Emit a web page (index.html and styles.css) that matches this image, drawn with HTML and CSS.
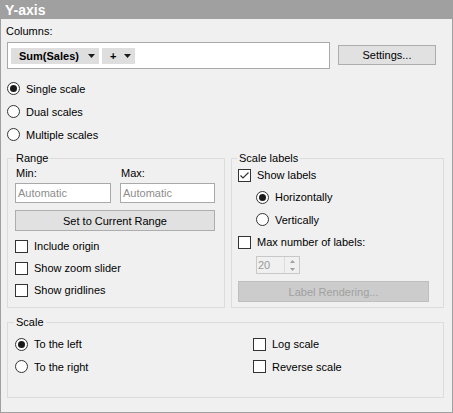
FILE: index.html
```html
<!DOCTYPE html>
<html>
<head>
<meta charset="utf-8">
<title>Y-axis</title>
<link rel="stylesheet" href="styles.css">
</head>
<body>
<div class="panel">
  <div class="title">Y-axis</div>
  <div class="body">
    <div class="cols-lbl">Columns:</div>
    <div class="cols-row">
      <div class="cols-box">
        <div class="chip chip-sum"><span>Sum(Sales)</span><svg class="arrow" width="7" height="4" viewBox="0 0 7 4"><polygon points="0,0 7,0 3.5,4" fill="#1a1a1a"/></svg></div>
        <div class="chip chip-plus"><span>+</span><svg class="arrow" width="7" height="4" viewBox="0 0 7 4"><polygon points="0,0 7,0 3.5,4" fill="#1a1a1a"/></svg></div>
      </div>
      <div class="btn settings">Settings...</div>
    </div>
    <div class="opt-list">
      <div class="opt"><span class="radio on"></span>Single scale</div>
      <div class="opt"><span class="radio"></span>Dual scales</div>
      <div class="opt"><span class="radio"></span>Multiple scales</div>
    </div>
    <div class="groups">
      <section class="grp range">
        <div class="legend">Range</div>
        <div class="range-grid">
          <div class="fld-lbl">Min:</div>
          <div class="fld-lbl">Max:</div>
          <div class="input">Automatic</div>
          <div class="input">Automatic</div>
        </div>
        <div class="btn wide">Set to Current Range</div>
        <div class="range-opts">
          <div class="opt"><span class="check"></span>Include origin</div>
          <div class="opt"><span class="check"></span>Show zoom slider</div>
          <div class="opt"><span class="check"></span>Show gridlines</div>
        </div>
      </section>
      <section class="grp labels">
        <div class="legend">Scale labels</div>
        <div class="label-opts">
          <div class="opt r1"><span class="check"><svg width="11" height="11" viewBox="0 0 11 11"><polyline points="1.5,5.5 4,8 9.5,2.5" fill="none" stroke="#333" stroke-width="1.2"/></svg></span>Show labels</div>
          <div class="opt ind r2"><span class="radio on"></span>Horizontally</div>
          <div class="opt ind r3"><span class="radio"></span>Vertically</div>
          <div class="opt r4"><span class="check"></span>Max number of labels:</div>
        </div>
        <div class="spin">
          <div class="spin-val">20</div>
          <div class="spin-btns">
            <div class="spin-b"><svg width="5" height="3" viewBox="0 0 5 3"><polygon points="0,3 5,3 2.5,0" fill="#a0a0a0"/></svg></div>
            <div class="spin-b"><svg width="5" height="3" viewBox="0 0 5 3"><polygon points="0,0 5,0 2.5,3" fill="#a0a0a0"/></svg></div>
          </div>
        </div>
        <div class="btn disabled render">Label Rendering...</div>
      </section>
    </div>
    <section class="grp scale">
      <div class="legend">Scale</div>
      <div class="scale-grid">
        <div class="opt"><span class="radio on"></span>To the left</div>
        <div class="opt"><span class="check"></span>Log scale</div>
        <div class="opt tall"><span class="radio"></span>To the right</div>
        <div class="opt tall"><span class="check"></span>Reverse scale</div>
      </div>
    </section>
  </div>
</div>
</body>
</html>
```
FILE: styles.css
```css
* { box-sizing: border-box; }
html, body { margin: 0; padding: 0; }
body {
  width: 453px;
  height: 413px;
  background: #ffffff;
  font-family: "Liberation Sans", Arial, sans-serif;
  font-size: 11px;
  color: #000;
}
.panel {
  width: 453px;
  height: 413px;
  background: #f0f0f0;
  border: 1px solid #a0a0a0;
  border-top: 0;
  display: flex;
  flex-direction: column;
}
.title {
  height: 19px;
  margin: 0 -1px;
  background: #a0a0a0;
  color: #fff;
  font-weight: bold;
  font-size: 14px;
  display: flex;
  align-items: center;
  padding-left: 5px;
}
.body { padding-left: 6px; }
.cols-lbl {
  height: 14px;
  margin-top: 5px;
  margin-left: -1px;
  display: flex;
  align-items: center;
}
.cols-row { display: flex; margin-top: 4px; }
.cols-box {
  width: 323px;
  height: 27px;
  background: #fff;
  border: 1px solid #a9a9a9;
  display: flex;
  align-items: flex-start;
  gap: 3px;
  padding: 5px 3px;
}
.chip {
  height: 16px;
  background: #dedede;
  display: flex;
  align-items: center;
  font-weight: bold;
  padding-left: 8px;
}
.chip .arrow { margin-left: auto; margin-right: 4px; flex: none; }
.chip-sum { width: 88px; }
.chip-plus { width: 33px; }
.btn {
  background: #e1e1e1;
  border: 1px solid #adadad;
  display: flex;
  align-items: center;
  justify-content: center;
}
.settings { width: 98px; height: 20px; margin-top: 3px; margin-left: 8px; }
.opt { display: flex; align-items: center; gap: 6px; height: 22px; white-space: nowrap; }
.opt-list { margin-top: 8px; }
.opt-list .opt { height: 23px; }
.radio {
  width: 13px;
  height: 13px;
  flex: none;
  border-radius: 50%;
  border: 1px solid #333;
  background: #fff;
  display: flex;
  align-items: center;
  justify-content: center;
}
.radio.on::after {
  content: "";
  width: 7px;
  height: 7px;
  border-radius: 50%;
  background: #1a1a1a;
}
.check {
  width: 13px;
  height: 13px;
  flex: none;
  border: 1px solid #333;
  background: #fff;
  display: flex;
  align-items: center;
  justify-content: center;
}
.check svg { display: block; }
.groups {
  display: grid;
  grid-template-columns: 218px 213px;
  column-gap: 6px;
  margin-top: 12px;
}
.grp {
  border: 1px solid #dcdcdc;
  padding-left: 7px;
  display: flex;
  flex-direction: column;
}
.legend {
  align-self: flex-start;
  margin: -7px 0 0 -1px;
  padding: 0 2px;
  height: 13px;
  line-height: 13px;
  background: #f0f0f0;
}
.range, .labels { height: 150px; }
.labels { padding-left: 6px; }
.range-grid {
  display: grid;
  grid-template-columns: 96px 95px;
  column-gap: 9px;
  row-gap: 3px;
  margin-top: 2px;
}
.fld-lbl { height: 13px; line-height: 13px; padding-left: 1px; }
.input {
  height: 20px;
  background: #fff;
  border: 1px solid #a9a9a9;
  color: #8d8d8d;
  padding-left: 2px;
  display: flex;
  align-items: center;
}
.wide { width: 200px; height: 21px; margin-top: 7px; }
.range-opts { margin-top: 4px; }
.label-opts { margin-top: -1px; }
.label-opts .r3 { height: 23px; }
.ind { padding-left: 18px; }
.spin {
  margin: 3px 0 0 18px;
  width: 44px;
  height: 18px;
  border: 1px solid #c8c8c8;
  display: flex;
}
.spin-val {
  flex: 1;
  color: #9a9a9a;
  padding-left: 1px;
  display: flex;
  align-items: center;
}
.spin-btns {
  width: 15px;
  display: flex;
  flex-direction: column;
  border-left: 1px solid #dcdcdc;
}
.spin-b {
  flex: 1;
  display: flex;
  align-items: center;
  justify-content: center;
}
.spin-b svg { display: block; }
.disabled { background: #cccccc; border-color: #bfbfbf; color: #a0a0a0; }
.render { width: 191px; height: 21px; margin-top: 7px; }
.scale { height: 76px; margin-top: 14px; width: 437px; }
.scale-grid {
  display: grid;
  grid-template-columns: 238px 1fr;
  margin-top: 4px;
}
.scale-grid .tall { height: 23px; }
```
